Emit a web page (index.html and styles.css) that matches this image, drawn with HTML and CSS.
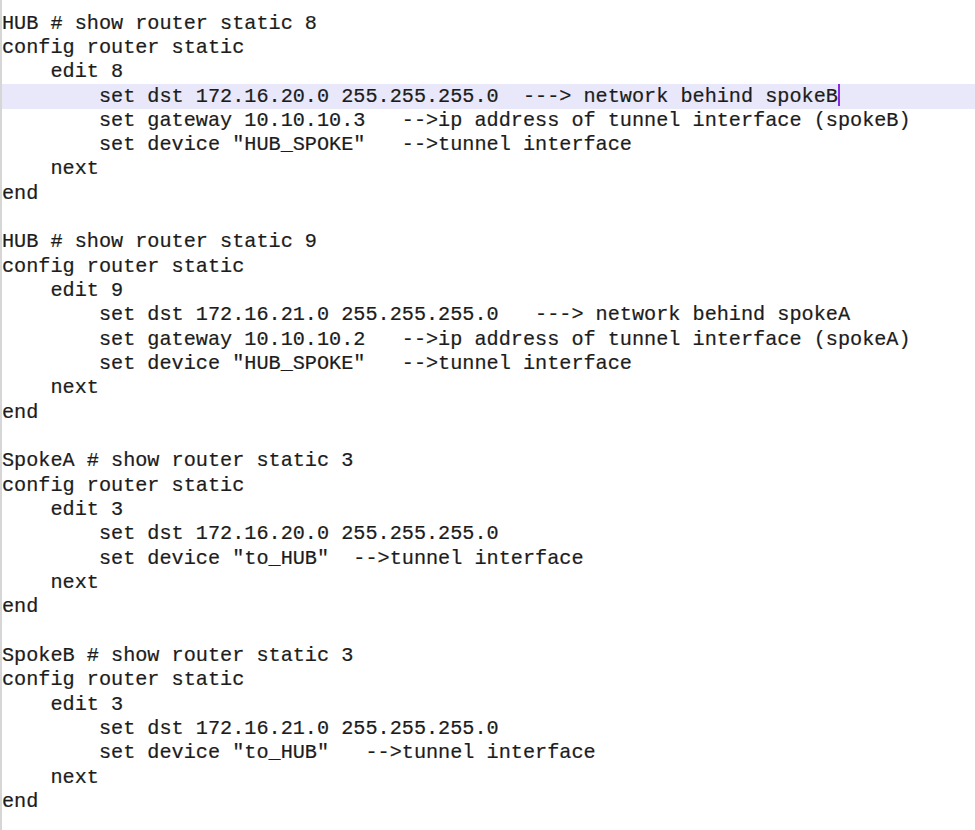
FILE: index.html
```html
<!DOCTYPE html>
<html>
<head>
<meta charset="utf-8">
<link rel="stylesheet" href="styles.css">
</head>
<body>
<div class="editor">
<pre class="code"><div class="ln">HUB # show router static 8</div><div class="ln">config router static</div><div class="ln">    edit 8</div><div class="ln current">        set dst 172.16.20.0 255.255.255.0  ---> network behind spokeB<span class="caret"></span></div><div class="ln">        set gateway 10.10.10.3   -->ip address of tunnel interface (spokeB)</div><div class="ln">        set device "HUB_SPOKE"   -->tunnel interface</div><div class="ln">    next</div><div class="ln">end</div><div class="ln"> </div><div class="ln">HUB # show router static 9</div><div class="ln">config router static</div><div class="ln">    edit 9</div><div class="ln">        set dst 172.16.21.0 255.255.255.0   ---> network behind spokeA</div><div class="ln">        set gateway 10.10.10.2   -->ip address of tunnel interface (spokeA)</div><div class="ln">        set device "HUB_SPOKE"   -->tunnel interface</div><div class="ln">    next</div><div class="ln">end</div><div class="ln"> </div><div class="ln">SpokeA # show router static 3</div><div class="ln">config router static</div><div class="ln">    edit 3</div><div class="ln">        set dst 172.16.20.0 255.255.255.0</div><div class="ln">        set device "to_HUB"  -->tunnel interface</div><div class="ln">    next</div><div class="ln">end</div><div class="ln"> </div><div class="ln">SpokeB # show router static 3</div><div class="ln">config router static</div><div class="ln">    edit 3</div><div class="ln">        set dst 172.16.21.0 255.255.255.0</div><div class="ln">        set device "to_HUB"   -->tunnel interface</div><div class="ln">    next</div><div class="ln">end</div></pre>
</div>
</body>
</html>
```
FILE: styles.css
```css
html, body {
  margin: 0;
  padding: 0;
  background: #ffffff;
}
.editor {
  width: 975px;
  height: 830px;
  box-sizing: border-box;
  border-left: 2px solid #d6d6d6;
  overflow: hidden;
}
.code {
  margin: 0;
  padding: 11.5px 0 0 0;
  font-family: "Courier New", "Nimbus Mono PS", "FreeMono", "Liberation Mono", monospace;
  font-size: 20.2px;
  color: #1c1c1c;
  -webkit-text-stroke: 0.2px #1c1c1c;
}
.ln {
  height: 24.34px;
  line-height: 24.34px;
  white-space: pre;
}
.current {
  background: #e8e8fa;
}
.caret {
  display: inline-block;
  width: 2px;
  height: 22px;
  vertical-align: -4px;
  background: #8a2be2;
}
```
